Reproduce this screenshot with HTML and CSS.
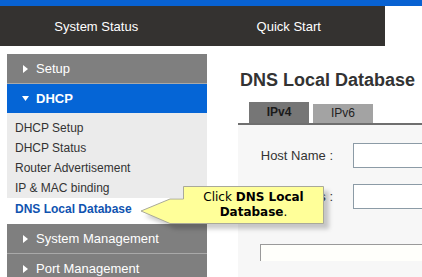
FILE: index.html
```html
<!DOCTYPE html>
<html lang="en">
<head>
    <meta charset="UTF-8">
    <title>DNS Local Database</title>
    <link rel="stylesheet" href="styles.css">
</head>
<body>
    <div class="top-strip"></div>
    <nav class="top-nav">
        <a class="top-link">System Status</a>
        <a class="top-link">Quick Start</a>
    </nav>

    <div class="main">
        <aside class="sidebar">
            <div class="menu-head">
                <svg class="caret" width="5" height="8" viewBox="0 0 5 8"><polygon points="0,0 5,4 0,8" fill="#fff"/></svg>
                Setup
            </div>
            <div class="menu-head open">
                <svg class="caret" width="7" height="5" viewBox="0 0 7 5"><polygon points="0,0 7,0 3.5,5" fill="#fff"/></svg>
                DHCP
            </div>
            <ul class="submenu">
                <li>DHCP Setup</li>
                <li>DHCP Status</li>
                <li>Router Advertisement</li>
                <li>IP &amp; MAC binding</li>
                <li class="current">DNS Local Database</li>
            </ul>
            <div class="menu-head">
                <svg class="caret" width="5" height="8" viewBox="0 0 5 8"><polygon points="0,0 5,4 0,8" fill="#fff"/></svg>
                System Management
            </div>
            <div class="menu-head">
                <svg class="caret" width="5" height="8" viewBox="0 0 5 8"><polygon points="0,0 5,4 0,8" fill="#fff"/></svg>
                Port Management
            </div>
        </aside>

        <section class="content">
            <h1>DNS Local Database</h1>
            <div class="tabs">
                <span class="tab on">IPv4</span>
                <span class="tab">IPv6</span>
            </div>
            <div class="panel">
                <div class="form-row">
                    <label class="form-label">Host Name :</label>
                    <div class="text-input"></div>
                </div>
                <div class="form-row">
                    <label class="form-label">IP Address :</label>
                    <div class="text-input"></div>
                </div>
                <div class="list-box"></div>
            </div>
        </section>
    </div>

    <!-- callout pointing at the menu item -->
    <div class="callout">
        <svg class="callout-shape" width="196" height="48" viewBox="0 0 196 48">
            <path d="M45.5,2.5 H185.5 V39.5 H32 L3,27 L32,15 H45.5 Z" fill="#ffff99" stroke="#a9a99a" stroke-width="1"/>
        </svg>
        <div class="callout-text">
            <span>Click <b>DNS Local<br>Database</b>.</span>
        </div>
    </div>
</body>
</html>
```

FILE: styles.css
```css
html, body {
    margin: 0;
    padding: 0;
    height: 277px;
    background-color: #fff;
    font-family: "Liberation Sans", Arial, sans-serif;
    color: #333;
    overflow: hidden;
}

.top-strip {
    height: 6px;
    background-color: #0862d2;
}

.top-nav {
    display: flex;
    width: 385px;
    height: 40px;
    background-color: #343230;
}

.top-link {
    flex: 1;
    display: flex;
    align-items: center;
    justify-content: center;
    color: #fff;
    font-size: 13px;
}

.main {
    display: flex;
    align-items: flex-start;
    height: 231px;
    overflow: hidden;
}

.sidebar {
    flex-shrink: 0;
    width: 200px;
    margin: 8px 0 0 7px;
}

.menu-head {
    display: flex;
    align-items: center;
    height: 29px;
    padding-left: 16px;
    background-color: #7f7f7f;
    border-bottom: 1px solid #a9a9a9;
    color: #fff;
    font-size: 13px;
    white-space: nowrap;
}

.menu-head .caret {
    margin-right: 8px;
}

.menu-head.open {
    padding-left: 15px;
    background-color: #0565d6;
    border-bottom: none;
    font-weight: bold;
}

.menu-head.open .caret {
    margin-right: 7px;
}

.submenu {
    list-style: none;
    margin: 0;
    padding: 5px 0 0;
    background-color: #ebebeb;
    font-size: 12px;
}

.submenu li {
    height: 20px;
    line-height: 20px;
    padding-left: 8px;
    color: #333;
}

.submenu li.current {
    height: 26px;
    line-height: 22px;
    background-color: #fff;
    color: #1053b0;
    font-weight: bold;
}

.content {
    flex: 1;
    min-width: 0;
    margin-left: 31px;
}

h1 {
    margin: 23px 0 0 2px;
    font-size: 18px;
    line-height: 22px;
    color: #333;
    white-space: nowrap;
}

.tabs {
    display: flex;
    align-items: flex-end;
    gap: 4px;
    height: 21px;
    margin-top: 11px;
    padding-left: 11px;
    border-bottom: 2px solid #6f6f6f;
}

.tab {
    width: 60px;
    height: 19px;
    line-height: 19px;
    text-align: center;
    background-color: #a3a3a3;
    color: #222;
    font-size: 12px;
}

.tab.on {
    height: 21px;
    line-height: 21px;
    background-color: #767676;
    font-weight: bold;
    color: #1a1a1a;
}

.panel {
    height: 134px;
    padding: 18px 0 0 21px;
    background-color: #f7f7f7;
}

.form-row {
    display: flex;
    align-items: center;
    margin-bottom: 16px;
}

.form-label {
    flex-shrink: 0;
    width: 74px;
    margin-right: 20px;
    text-align: right;
    font-size: 13px;
    color: #333;
    white-space: nowrap;
}

.text-input {
    flex: 1;
    height: 23px;
    border: 1px solid #8c9ba6;
    border-right: none;
    background-color: #fff;
}

.list-box {
    height: 16px;
    margin: 35px 0 0 1px;
    border-top: 1px solid #9a9a9a;
    border-left: 1px solid #9a9a9a;
    background-color: #fffffb;
}

.callout {
    position: absolute;
    left: 138px;
    top: 184px;
    width: 196px;
    height: 48px;
}

.callout-shape {
    display: block;
    filter: drop-shadow(5px 5px 2px rgba(0, 0, 0, 0.2));
}

.callout-text {
    position: absolute;
    left: 46px;
    top: 3px;
    width: 139px;
    height: 36px;
    display: flex;
    align-items: center;
    justify-content: center;
    text-align: center;
    font-family: "DejaVu Sans", Verdana, sans-serif;
    font-size: 12px;
    line-height: 15px;
    color: #000;
}
```
